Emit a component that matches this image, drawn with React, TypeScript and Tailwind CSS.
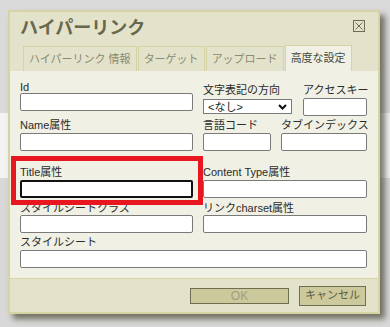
import React from 'react';

const font = "font-['Liberation_Sans','Noto_Sans_CJK_JP',sans-serif]";

const Label = ({ text, h, mt = 0 }: { text: string; h: number; mt?: number }) => (
    <div
        className="text-[11px] leading-[12px] text-[#2b2b2b] whitespace-nowrap"
        style={{ height: h, marginTop: mt }}
    >
        {text}
    </div>
);

const Input = ({ focused = false }: { focused?: boolean }) => (
    <div
        className={`h-[18px] w-full rounded-[2px] bg-white ${focused ? 'border-2 border-[#111]' : 'border border-[#7a7a7a]'}`}
    />
);

const tabs = ['ハイパーリンク 情報', 'ターゲット', 'アップロード', '高度な設定'];

export default function App() {
    return (
        <div
            className={`relative w-[390px] h-[327px] overflow-hidden pt-[10px] pl-[8px] ${font} bg-[linear-gradient(to_bottom,#dadada_113px,#f3f3f3_113px,#f3f3f3_178px,#d8d8d8_178px)]`}
        >
            {/* dialog */}
            <div className="w-[372px] h-[304px] border-2 border-[#d6d4a4] bg-[#e3e2ca] shadow-[5px_5px_6px_rgba(55,55,35,0.65)] flex flex-col">
                {/* title */}
                <div className="h-[33px] flex justify-between items-start pl-[10px] pr-[13px]">
                    <div className="pt-[5px] text-[18px] leading-[22px] font-bold text-[#68684c]">ハイパーリンク</div>
                    <svg width="12" height="12" viewBox="0 0 12 12" className="mt-[8px]">
                        <rect x="0.5" y="0.5" width="11" height="11" fill="none" stroke="#6d6d50" />
                        <path d="M2.5 2.5 L9.5 9.5 M9.5 2.5 L2.5 9.5" stroke="#6d6d50" strokeWidth="1" />
                    </svg>
                </div>

                {/* tabs */}
                <div className="h-[26px] flex items-end gap-[1px] pl-[13px]">
                    {tabs.map((t, i) => {
                        const active = i === tabs.length - 1;
                        return (
                            <div
                                key={t}
                                className={`flex items-center px-[5px] text-[11px] border border-b-0 whitespace-nowrap ${
                                    active
                                        ? 'h-[26px] bg-[#f0f0e4] border-[#d6d4a4] text-[#4a4a3c]'
                                        : 'h-[25px] bg-[#e3e2ca] border-[#d6d4a4] text-[#8a8a70]'
                                }`}
                            >
                                {t}
                            </div>
                        );
                    })}
                </div>

                {/* panel */}
                <div className="h-[207px] bg-[#f0f0e4] pt-[10px] pl-[10px] pr-[11px]">
                    {/* row 1 */}
                    <div className="h-[38px] flex">
                        <div className="w-[173px]">
                            <Label text="Id" h={12} />
                            <Input />
                        </div>
                        <div className="w-[89px] ml-[10px]">
                            <Label text="文字表記の方向" h={12} mt={3} />
                            <div className="mt-[3px] h-[15px] border border-[#7a7a7a] bg-white flex items-center justify-between pl-[4px] pr-[4px] text-[11px] text-[#222]">
                                <span className="leading-[12px]">&lt;なし&gt;</span>
                                <svg width="9" height="6" viewBox="0 0 9 6">
                                    <path d="M1 1 L4.5 4.5 L8 1" fill="none" stroke="#111" strokeWidth="2" />
                                </svg>
                            </div>
                        </div>
                        <div className="w-[64px] ml-[11px]">
                            <Label text="アクセスキー" h={12} mt={3} />
                            <div className="mt-[2px]">
                                <Input />
                            </div>
                        </div>
                    </div>

                    {/* row 2 */}
                    <div className="h-[47px] flex">
                        <div className="w-[173px]">
                            <Label text="Name属性" h={14} />
                            <Input />
                        </div>
                        <div className="w-[68px] ml-[10px]">
                            <Label text="言語コード" h={14} />
                            <Input />
                        </div>
                        <div className="w-[86px] ml-[10px]">
                            <Label text="タブインデックス" h={14} />
                            <Input />
                        </div>
                    </div>

                    {/* row 3 */}
                    <div className="h-[36px] flex">
                        <div className="w-[173px]">
                            <Label text="Title属性" h={14} />
                            <Input focused />
                        </div>
                        <div className="w-[164px] ml-[10px]">
                            <Label text="Content Type属性" h={14} />
                            <Input />
                        </div>
                    </div>

                    {/* row 4 */}
                    <div className="h-[34px] flex">
                        <div className="w-[173px]">
                            <Label text="スタイルシートクラス" h={13} />
                            <Input />
                        </div>
                        <div className="w-[164px] ml-[10px]">
                            <Label text="リンクcharset属性" h={13} />
                            <Input />
                        </div>
                    </div>

                    {/* row 5 */}
                    <div>
                        <Label text="スタイルシート" h={14} />
                        <Input />
                    </div>
                </div>

                {/* footer */}
                <div className="flex-1 border-t border-[#d6d4a4] flex items-center justify-end pr-[12px]">
                    <div className="w-[99px] h-[16px] border border-[#6e6e50] bg-[#ccc99c] flex items-center justify-center text-[12px] text-[#a09e80]">
                        OK
                    </div>
                    <div className="ml-[10px] w-[67px] h-[20px] border-[1.5px] border-[#6e6e50] bg-[#ccc99c] flex items-center justify-center text-[11px] text-[#5d5d45]">
                        キャンセル
                    </div>
                </div>
            </div>

            {/* highlight annotation */}
            <div className="absolute left-[11px] top-[156px] w-[192px] h-[49px] border-[5px] border-[#e8161f]" />
        </div>
    );
}
